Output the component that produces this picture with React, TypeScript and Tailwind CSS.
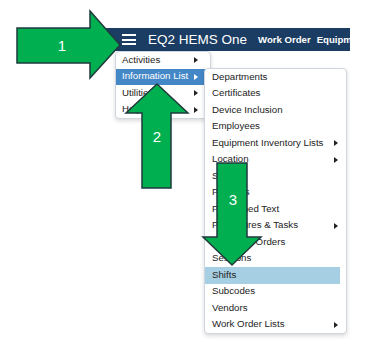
import { ReactNode } from "react"

const mainItems = ["Activities", "Information List", "Utilities", "Help"]

const subItems: { label: string; more?: boolean }[] = [
  { label: "Departments" },
  { label: "Certificates" },
  { label: "Device Inclusion" },
  { label: "Employees" },
  { label: "Equipment Inventory Lists", more: true },
  { label: "Location", more: true },
  { label: "Security" },
  { label: "Priorities" },
  { label: "Predefined Text" },
  { label: "Procedures & Tasks", more: true },
  { label: "Purchase Orders" },
  { label: "Sessions" },
  { label: "Shifts" },
  { label: "Subcodes" },
  { label: "Vendors" },
  { label: "Work Order Lists", more: true },
]

function Caret({ white }: { white?: boolean }) {
  return (
    <svg width="4" height="6" viewBox="0 0 4 6" className="shrink-0">
      <polygon points="0,0 4,3 0,6" fill={white ? "#ffffff" : "#222222"} />
    </svg>
  )
}

function Row({ active, soft, children }: { active?: boolean; soft?: boolean; children: ReactNode }) {
  return (
    <div
      className={
        "flex h-[16.5px] items-center justify-between " +
        (active ? "bg-[#4487c7] text-white" : soft ? "bg-[#a6cfe3] text-[#222]" : "text-[#222]")
      }
    >
      {children}
    </div>
  )
}

export default function App() {
  return (
    <div className="relative h-[347px] w-[387px] overflow-hidden bg-white font-['Liberation_Sans',Arial,sans-serif]">
      {/* Navbar */}
      <div className="ml-[100px] mt-[28px] flex h-[23px] w-[250px] items-center overflow-hidden whitespace-nowrap bg-[#1b3d63] text-white">
        <div className="ml-[22px] flex w-[14px] shrink-0 flex-col gap-[2.5px]">
          <span className="h-[2px] bg-white" />
          <span className="h-[2px] bg-white" />
          <span className="h-[2px] bg-white" />
        </div>
        <span className="ml-[12px] shrink-0 text-[13.5px] leading-none">EQ2 HEMS One</span>
        <span className="ml-[11px] shrink-0 text-[9.6px] font-bold leading-none">Work Order</span>
        <span className="ml-[6px] shrink-0 text-[9.6px] font-bold leading-none">Equipment</span>
      </div>

      {/* Main dropdown */}
      <div className="absolute left-[115px] top-[51px] w-[96px] rounded-sm border border-[#cfd6dd] bg-white text-[9.7px] shadow-[0_2px_4px_rgba(0,0,0,0.15)]">
        {mainItems.map((item, i) => (
          <Row key={item} active={i === 1}>
            <span className="pl-[6px]">{item}</span>
            <span className="pr-[12px]">
              <Caret white={i === 1} />
            </span>
          </Row>
        ))}
      </div>

      {/* Sub dropdown */}
      <div className="absolute left-[204px] top-[68px] w-[143px] rounded-sm border border-[#cfd6dd] bg-white pr-[6px] text-[9.7px] shadow-[0_2px_4px_rgba(0,0,0,0.15)]">
        {subItems.map((item) => (
          <Row key={item.label} soft={item.label === "Shifts"}>
            <span className="pl-[7px]">{item.label}</span>
            {item.more && (
              <span className="pr-[2px]">
                <Caret />
              </span>
            )}
          </Row>
        ))}
      </div>

      {/* Callout arrows */}
      <svg className="pointer-events-none absolute inset-0" width="387" height="347" viewBox="0 0 387 347">
        <g fill="#00b050" stroke="#1e3a3c" strokeWidth="1.5" strokeLinejoin="miter">
          <polygon points="17,28 90,28 90,11 120,45 90,78 90,63 17,63" />
          <polygon points="157,84 188,113 171,113 171,188 142,188 142,113 126,113" />
          <polygon points="217,163 247,163 247,237 261,237 232,265 203,237 217,237" />
        </g>
        <g fill="#ffffff" fontFamily="Liberation Sans, Arial, sans-serif" fontSize="15" textAnchor="middle">
          <text x="62" y="51">1</text>
          <text x="157" y="142">2</text>
          <text x="233" y="205">3</text>
        </g>
      </svg>
    </div>
  )
}
